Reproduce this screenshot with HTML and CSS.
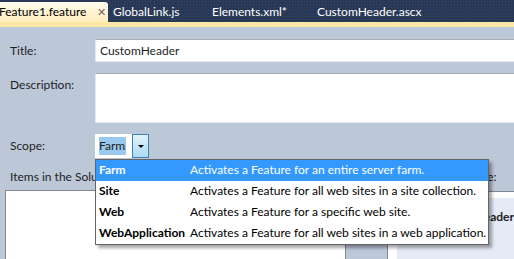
FILE: index.html
```html
<!DOCTYPE html>
<html lang="en">

<head>
    <meta charset="UTF-8">
    <title>Feature1.feature</title>
    <link rel="stylesheet" href="styles.css">
</head>

<body>
    <div class="tab-bar">
        <div class="tab active">Feature1.feature <span class="tab-close">&#x2715;</span></div>
        <div class="tab">GlobalLink.js</div>
        <div class="tab">Elements.xml*</div>
        <div class="tab">CustomHeader.ascx</div>
    </div>
    <div class="tab-strip"></div>

    <div class="designer">
        <div class="field-row">
            <label class="field-label">Title:</label>
            <div class="text-box title-box">CustomHeader</div>
        </div>
        <div class="field-row">
            <label class="field-label">Description:</label>
            <div class="text-box desc-box"></div>
        </div>
        <div class="field-row">
            <label class="field-label">Scope:</label>
            <div class="combo">
                <div class="combo-value"><span class="selected-text">Farm</span></div>
                <div class="combo-btn"><span class="arrow"></span></div>

                <div class="dropdown">
                    <div class="option highlighted"><span class="opt-name">Farm</span><span>Activates a Feature for an entire server farm.</span></div>
                    <div class="option"><span class="opt-name">Site</span><span>Activates a Feature for all web sites in a site collection.</span></div>
                    <div class="option"><span class="opt-name">Web</span><span>Activates a Feature for a specific web site.</span></div>
                    <div class="option"><span class="opt-name">WebApplication</span><span>Activates a Feature for all web sites in a web application.</span></div>
                </div>
            </div>
        </div>

        <div class="lists">
            <div class="list-col left-col">
                <div class="list-label">Items in the Solution:</div>
                <div class="list-box"></div>
            </div>
            <div class="list-gap"></div>
            <div class="list-col right-col">
                <div class="list-label">Items in the Feature:</div>
                <div class="list-box feature-box">
                    <div class="feature-item">CustomHeader</div>
                </div>
            </div>
        </div>
    </div>
</body>

</html>
```
FILE: styles.css
```css
body {
    margin: 0;
    font-family: Lato, "Open Sans", sans-serif;
    font-size: 12px;
    color: #1e1e1e;
    background-color: #bcc7d8;
    overflow: hidden;
    width: 514px;
    height: 259px;
}

.tab-bar {
    display: flex;
    height: 22px;
    background-color: #293955;
    background-image: radial-gradient(#33456a 0.6px, transparent 0.8px);
    background-size: 3px 3px;
    align-items: flex-end;
}

.tab {
    color: #fff;
    height: 20px;
    line-height: 20px;
    white-space: nowrap;
    flex: none;
}

.tab.active {
    color: #000;
    width: 109px;
    margin-left: -1px;
    background: linear-gradient(#fffbf0, #ffedb9);
    border-top-right-radius: 3px;
}

.tab:nth-child(2) {
    margin-left: 5px;
    width: 99px;
}

.tab:nth-child(3) {
    width: 105px;
}

.tab-close {
    color: #6d6a5e;
    font-size: 11px;
    margin-left: 8px;
}

.tab-strip {
    height: 5px;
    background-color: #ffe8a6;
}

.designer {
    padding: 12px 0 0 10px;
    position: relative;
}

.field-row {
    display: grid;
    grid-template-columns: 85px 1fr;
    margin-bottom: 11px;
}

.field-label {
    padding-top: 4px;
}

.text-box {
    background-color: #fff;
    border: 1px solid #e3e9ef;
    border-top-color: #abadb3;
    border-right: none;
    padding-left: 4px;
    box-sizing: border-box;
}

.title-box {
    height: 23px;
    line-height: 21px;
}

.desc-box {
    height: 50px;
}

.combo {
    position: relative;
    display: flex;
    width: 54px;
    height: 24px;
}

.combo-value {
    flex: 1;
    background-color: #fff;
    padding: 4px 0 0 4px;
}

.selected-text {
    background-color: #99c9ef;
    padding: 1px 1px 2px 0;
}

.combo-btn {
    width: 15px;
    border: 1px solid #3c7fb1;
    background: linear-gradient(#e3f3fc, #a9daf5);
    display: flex;
    align-items: center;
    justify-content: center;
}

.arrow {
    border-left: 3px solid transparent;
    border-right: 3px solid transparent;
    border-top: 3px solid #000;
}

.dropdown {
    position: absolute;
    top: 25px;
    left: 0;
    width: 392px;
    background-color: #fff;
    border: 1px solid #646464;
    box-shadow: 3px 3px 3px rgba(0, 0, 0, 0.35);
    z-index: 2;
}

.option {
    display: flex;
    height: 21px;
    line-height: 20px;
    color: #000;
    white-space: nowrap;
}

.option.highlighted {
    background-color: #3399ff;
    color: #fff;
}

.opt-name {
    font-weight: bold;
    flex: none;
    width: 91px;
    padding-left: 3px;
}

.lists {
    display: flex;
    margin-left: -5px;
    margin-top: 2px;
}

.left-col {
    width: 341px;
}

.list-gap {
    width: 41px;
}

.right-col {
    flex: 1;
}

.list-label {
    padding-left: 5px;
    height: 21px;
}

.right-col .list-label {
    padding-left: 2px;
    height: 22px;
}

.list-box {
    background-color: #fff;
    border: 1px solid #828790;
    border-right: none;
    height: 70px;
}

.left-col .list-box {
    border-right: 1px solid #828790;
}

.feature-box {
    padding: 6px 0 0 9px;
}

.feature-item {
    background-color: #e4eaf6;
    height: 60px;
    font-weight: bold;
    padding: 11px 0 0 37px;
}
```
